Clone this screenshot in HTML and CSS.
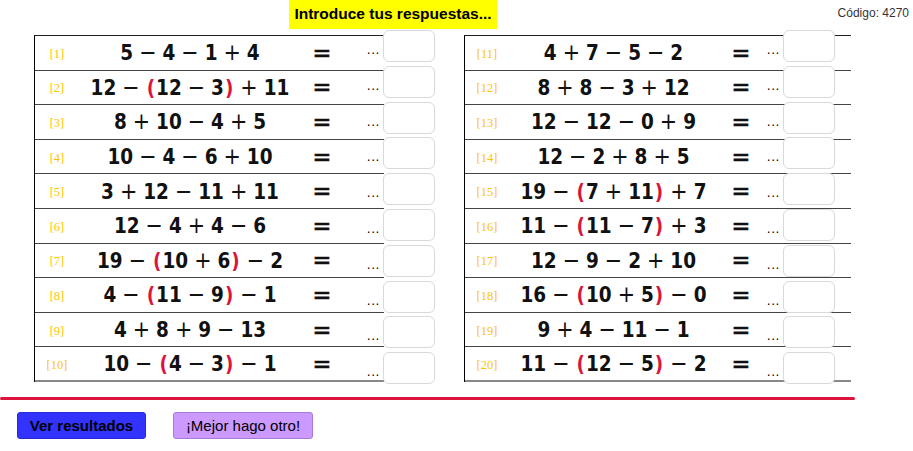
FILE: index.html
```html
<!DOCTYPE html>
<html lang="es">
<head>
<meta charset="utf-8">
<title>Introduce tus respuestas</title>
<link rel="stylesheet" href="styles.css">
</head>
<body>
<header class="top">
  <div class="banner">Introduce tus respuestas...</div>
  <div class="code">Código: 4270</div>
</header>

<main class="sheet">
  <section class="table table-left">
    <div class="row"><span class="lbl">[1]</span><span class="expr">5<span class="op">−</span>4<span class="op">−</span>1<span class="op">+</span>4</span><span class="eq">=</span></div>
    <div class="row"><span class="lbl">[2]</span><span class="expr">12<span class="op">−</span><span class="p">(</span>12<span class="op">−</span>3<span class="p">)</span><span class="op">+</span>11</span><span class="eq">=</span></div>
    <div class="row"><span class="lbl">[3]</span><span class="expr">8<span class="op">+</span>10<span class="op">−</span>4<span class="op">+</span>5</span><span class="eq">=</span></div>
    <div class="row"><span class="lbl">[4]</span><span class="expr">10<span class="op">−</span>4<span class="op">−</span>6<span class="op">+</span>10</span><span class="eq">=</span></div>
    <div class="row"><span class="lbl">[5]</span><span class="expr">3<span class="op">+</span>12<span class="op">−</span>11<span class="op">+</span>11</span><span class="eq">=</span></div>
    <div class="row"><span class="lbl">[6]</span><span class="expr">12<span class="op">−</span>4<span class="op">+</span>4<span class="op">−</span>6</span><span class="eq">=</span></div>
    <div class="row"><span class="lbl">[7]</span><span class="expr">19<span class="op">−</span><span class="p">(</span>10<span class="op">+</span>6<span class="p">)</span><span class="op">−</span>2</span><span class="eq">=</span></div>
    <div class="row"><span class="lbl">[8]</span><span class="expr">4<span class="op">−</span><span class="p">(</span>11<span class="op">−</span>9<span class="p">)</span><span class="op">−</span>1</span><span class="eq">=</span></div>
    <div class="row"><span class="lbl">[9]</span><span class="expr">4<span class="op">+</span>8<span class="op">+</span>9<span class="op">−</span>13</span><span class="eq">=</span></div>
    <div class="row"><span class="lbl">[10]</span><span class="expr">10<span class="op">−</span><span class="p">(</span>4<span class="op">−</span>3<span class="p">)</span><span class="op">−</span>1</span><span class="eq">=</span></div>
    <div class="answers">
      <div class="ans"><span class="dots">...</span><span class="box"></span></div>
      <div class="ans"><span class="dots">...</span><span class="box"></span></div>
      <div class="ans"><span class="dots">...</span><span class="box"></span></div>
      <div class="ans"><span class="dots">...</span><span class="box"></span></div>
      <div class="ans"><span class="dots">...</span><span class="box"></span></div>
      <div class="ans"><span class="dots">...</span><span class="box"></span></div>
      <div class="ans"><span class="dots">...</span><span class="box"></span></div>
      <div class="ans"><span class="dots">...</span><span class="box"></span></div>
      <div class="ans"><span class="dots">...</span><span class="box"></span></div>
      <div class="ans"><span class="dots">...</span><span class="box"></span></div>
    </div>
  </section>

  <section class="table table-right">
    <div class="row"><span class="lbl">[11]</span><span class="expr">4<span class="op">+</span>7<span class="op">−</span>5<span class="op">−</span>2</span><span class="eq">=</span></div>
    <div class="row"><span class="lbl">[12]</span><span class="expr">8<span class="op">+</span>8<span class="op">−</span>3<span class="op">+</span>12</span><span class="eq">=</span></div>
    <div class="row"><span class="lbl">[13]</span><span class="expr">12<span class="op">−</span>12<span class="op">−</span>0<span class="op">+</span>9</span><span class="eq">=</span></div>
    <div class="row"><span class="lbl">[14]</span><span class="expr">12<span class="op">−</span>2<span class="op">+</span>8<span class="op">+</span>5</span><span class="eq">=</span></div>
    <div class="row"><span class="lbl">[15]</span><span class="expr">19<span class="op">−</span><span class="p">(</span>7<span class="op">+</span>11<span class="p">)</span><span class="op">+</span>7</span><span class="eq">=</span></div>
    <div class="row"><span class="lbl">[16]</span><span class="expr">11<span class="op">−</span><span class="p">(</span>11<span class="op">−</span>7<span class="p">)</span><span class="op">+</span>3</span><span class="eq">=</span></div>
    <div class="row"><span class="lbl">[17]</span><span class="expr">12<span class="op">−</span>9<span class="op">−</span>2<span class="op">+</span>10</span><span class="eq">=</span></div>
    <div class="row"><span class="lbl">[18]</span><span class="expr">16<span class="op">−</span><span class="p">(</span>10<span class="op">+</span>5<span class="p">)</span><span class="op">−</span>0</span><span class="eq">=</span></div>
    <div class="row"><span class="lbl">[19]</span><span class="expr">9<span class="op">+</span>4<span class="op">−</span>11<span class="op">−</span>1</span><span class="eq">=</span></div>
    <div class="row"><span class="lbl">[20]</span><span class="expr">11<span class="op">−</span><span class="p">(</span>12<span class="op">−</span>5<span class="p">)</span><span class="op">−</span>2</span><span class="eq">=</span></div>
    <div class="answers">
      <div class="ans"><span class="dots">...</span><span class="box"></span></div>
      <div class="ans"><span class="dots">...</span><span class="box"></span></div>
      <div class="ans"><span class="dots">...</span><span class="box"></span></div>
      <div class="ans"><span class="dots">...</span><span class="box"></span></div>
      <div class="ans"><span class="dots">...</span><span class="box"></span></div>
      <div class="ans"><span class="dots">...</span><span class="box"></span></div>
      <div class="ans"><span class="dots">...</span><span class="box"></span></div>
      <div class="ans"><span class="dots">...</span><span class="box"></span></div>
      <div class="ans"><span class="dots">...</span><span class="box"></span></div>
      <div class="ans"><span class="dots">...</span><span class="box"></span></div>
    </div>
  </section>
</main>

<div class="divider"></div>

<footer class="actions">
  <button class="btn btn-check">Ver resultados</button>
  <button class="btn btn-new">¡Mejor hago otro!</button>
</footer>
</body>
</html>
```

FILE: styles.css
```css
html, body {
  margin: 0;
  padding: 0;
  background: #ffffff;
}

body {
  width: 913px;
  height: 451px;
  overflow: hidden;
  font-family: "Liberation Sans", Arimo, Arial, sans-serif;
  color: #000;
}

.top {
  display: flex;
  align-items: flex-start;
  height: 35px;
  padding-left: 289px;
  box-sizing: border-box;
}

.banner {
  background: #ffff00;
  height: 29px;
  width: 208px;
  box-sizing: border-box;
  font-weight: bold;
  font-size: 15.5px;
  line-height: 27px;
  text-align: center;
  white-space: nowrap;
}

.code {
  margin-left: auto;
  margin-right: 4px;
  margin-top: 6px;
  font-size: 12px;
  color: #333;
}

.sheet {
  display: flex;
  gap: 80px;
  padding-left: 34px;
}

.table {
  position: relative;
  border-left: 1px solid #000;
  border-top: 1px solid #222;
  box-sizing: border-box;
}

.table-left {
  width: 350px;
}

.table-right {
  width: 387px;
}

.row {
  display: grid;
  align-items: center;
  height: 34.6px;
  box-sizing: border-box;
  border-bottom: 1px solid #444;
}

.row:nth-child(10) {
  border-bottom: 2px solid #888;
}

.table-left .row {
  grid-template-columns: 44px 222px 42px 1fr;
}

.table-right .row {
  grid-template-columns: 44px 209px 46px 1fr;
}

.lbl {
  font-family: "Liberation Serif", "Times New Roman", serif;
  font-size: 12.5px;
  color: #ffc400;
  text-align: center;
  padding-top: 3px;
}

.expr {
  font-family: "DejaVu Sans Condensed", "DejaVu Sans", sans-serif;
  font-stretch: condensed;
  font-weight: bold;
  font-size: 20.5px;
  line-height: 24px;
  text-align: center;
  white-space: nowrap;
  color: #111;
}

.eq {
  font-family: "DejaVu Sans Condensed", "DejaVu Sans", sans-serif;
  font-stretch: condensed;
  font-weight: normal;
  font-size: 25px;
  line-height: 24px;
  text-align: center;
  color: #111;
  -webkit-text-stroke: 0.6px #111;
}

.op {
  font-weight: normal;
  font-size: 23px;
  margin: 0 6px;
}

.p {
  color: #dc143c;
  margin: 0 1px;
}

.answers {
  position: absolute;
  top: -6px;
  display: flex;
  flex-direction: column;
  gap: 3.8px;
}

.table-left .answers {
  left: 331px;
}

.table-right .answers {
  left: 301px;
}

.ans {
  display: flex;
  align-items: flex-start;
  height: 32px;
}

.dots {
  width: 14px;
  margin-right: 3px;
  margin-top: 14px;
  font-family: "DejaVu Sans", sans-serif;
  font-size: 12px;
  line-height: 13px;
  letter-spacing: 0.6px;
  text-align: right;
}

.box {
  width: 52px;
  height: 32px;
  box-sizing: border-box;
  border: 1px solid #d9d9d9;
  border-radius: 6px;
  background: #fff;
}

.divider {
  width: 855px;
  height: 3px;
  margin-top: 15px;
  background: #dc143c;
  border-radius: 2px;
}

.actions {
  display: flex;
  gap: 27px;
  padding-left: 17px;
  margin-top: 12px;
}

.btn {
  height: 27px;
  box-sizing: border-box;
  border-radius: 3px;
  font-family: "Liberation Sans", Arimo, Arial, sans-serif;
  font-size: 15px;
  color: #000;
  padding: 0;
  margin: 0;
}

.btn-check {
  width: 129px;
  background: #3333ff;
  border: 1px solid #2a2ad0;
  font-weight: bold;
}

.btn-new {
  width: 140px;
  background: #cc99ff;
  border: 1px solid #a77ad6;
}
```
